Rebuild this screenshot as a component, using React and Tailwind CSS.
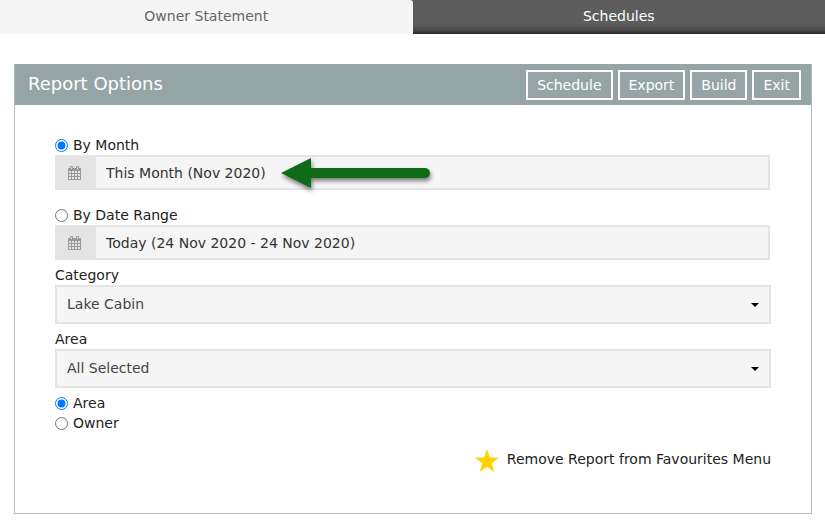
import { useState } from 'react'

/* ── Icons ───────────────────────────────────────────────────── */
function CalendarIcon() {
  return (
    <svg viewBox="0 0 13 14" width="13" height="14" aria-hidden="true">
      {/* body with its day cells cut out */}
      <path
        fill="currentColor"
        fillRule="evenodd"
        d="M1 2h11a1 1 0 0 1 1 1v10a1 1 0 0 1-1 1H1a1 1 0 0 1-1-1V3a1 1 0 0 1 1-1zM1 5v2h2V5zM4 5v2h2V5zM7 5v2h2V5zM10 5v2h2V5zM1 8v2h2V8zM4 8v2h2V8zM7 8v2h2V8zM10 8v2h2V8zM1 11v2h2v-2zM4 11v2h2v-2zM7 11v2h2v-2zM10 11v2h2v-2z"
      />
      {/* binder rings */}
      <path fill="currentColor" d="M2 1a1 1 0 0 1 1-1h1a1 1 0 0 1 1 1v3H2zM8 1a1 1 0 0 1 1-1h1a1 1 0 0 1 1 1v3H8z" />
      <path fill="#e4e4e4" d="M3 1h1v2H3zM9 1h1v2H9z" />
    </svg>
  )
}

function StarIcon() {
  return (
    <svg viewBox="0 0 24 24" width="24" height="24" fill="#ffd200" aria-hidden="true">
      <path d="M12 0l2.900 8.600 9.100.1-7.300 5.500 2.700 8.800-7.400-5.300L4.600 23l2.700-8.800L0 8.700l9.100-.1z" />
    </svg>
  )
}

function Arrow() {
  return (
    <svg viewBox="0 0 160 42" width="160" height="42" className="drop-shadow-[1px_3px_2px_rgba(0,0,0,0.5)]" aria-hidden="true">
      <path d="M1 18L31 3v10h114a5 5 0 0 1 0 10H31v10z" fill="#0f6b18" />
    </svg>
  )
}

/* ── Form parts ──────────────────────────────────────────────── */
function RadioOption({ name, label, checked, onChange }) {
  return (
    <label className="flex h-5 items-center gap-[5px]">
      <input type="radio" name={name} checked={checked} onChange={onChange} className="size-[13px] accent-[#0075ff]" />
      {label}
    </label>
  )
}

function DateField({ label, value, children }) {
  return (
    <div className="relative mr-px flex h-[35px] border-2 border-[#e4e4e4] bg-[#f5f5f5]">
      <span className="flex w-[39px] items-center justify-center bg-[#e4e4e4] pr-1 text-[#999]">
        <CalendarIcon />
      </span>
      <input
        type="text"
        aria-label={label}
        defaultValue={value}
        className="min-w-0 flex-1 px-2.5 text-[#333] outline-none"
      />
      {children}
    </div>
  )
}

function SelectField({ id, label, options }) {
  return (
    <div className="mt-[5px]">
      <label htmlFor={id} className="block">{label}</label>
      <div className="relative">
        <select
          id={id}
          className="block h-[39px] w-full appearance-none border-2 border-[#e4e4e4] bg-[#f5f5f5] px-2.5 pb-0.5 text-[#444] outline-none"
        >
          {options.map((o) => <option key={o}>{o}</option>)}
        </select>
        <svg viewBox="0 0 8 4" width="8" height="4" className="pointer-events-none absolute top-[18px] right-3" aria-hidden="true">
          <path d="M0 0h8L4 4z" />
        </svg>
      </div>
    </div>
  )
}

const ACTIONS = ['Schedule', 'Export', 'Build', 'Exit']

export default function App() {
  const [period, setPeriod] = useState('month')
  const [filter, setFilter] = useState('area')

  return (
    <div className="min-h-screen bg-white font-['DejaVu_Sans',Verdana,sans-serif] text-[14px] leading-5 text-[#222]">
      <nav className="grid h-[34px] grid-cols-2 bg-linear-to-b from-[#5d5d5d] from-70% via-[#484848] via-90% to-[#2e1f24]">
        <button type="button" className="rounded-tr-[3px] bg-[#f5f5f5] pb-0.5 text-[#666]">Owner Statement</button>
        <button type="button" className="pb-0.5 text-white">Schedules</button>
      </nav>

      <main className="mt-[30px] mr-[13px] ml-3.5 border border-t-0 border-[#b0bcbc]">
        <header className="flex h-[41px] items-center justify-between bg-[#95a5a5] pr-2.5 pl-[13px] text-white">
          <h1 className="pb-0.5 text-[18px] font-medium">Report Options</h1>
          <div className="flex gap-[5px]">
            {ACTIONS.map((a) => (
              <button key={a} type="button" className="h-[30px] border-2 border-white px-[9px]">{a}</button>
            ))}
          </div>
        </header>

        <form className="px-10 pt-[30px] pb-10">
          <RadioOption name="period" label="By Month" checked={period === 'month'} onChange={() => setPeriod('month')} />
          <DateField label="Month" value="This Month (Nov 2020)">
            <div className="pointer-events-none absolute -top-0.5 left-[223px]">
              <Arrow />
            </div>
          </DateField>

          <div className="mt-[15px]">
            <RadioOption name="period" label="By Date Range" checked={period === 'range'} onChange={() => setPeriod('range')} />
            <DateField label="Date range" value="Today (24 Nov 2020 - 24 Nov 2020)" />
          </div>

          <SelectField id="category" label="Category" options={['Lake Cabin']} />
          <SelectField id="area" label="Area" options={['All Selected']} />

          <div className="mt-[5px]">
            <RadioOption name="filter" label="Area" checked={filter === 'area'} onChange={() => setFilter('area')} />
            <RadioOption name="filter" label="Owner" checked={filter === 'owner'} onChange={() => setFilter('owner')} />
          </div>

          <div className="mt-4 flex justify-end">
            <a href="#favourites" className="flex gap-2">
              <StarIcon />
              Remove Report from Favourites Menu
            </a>
          </div>
        </form>
      </main>
    </div>
  )
}
